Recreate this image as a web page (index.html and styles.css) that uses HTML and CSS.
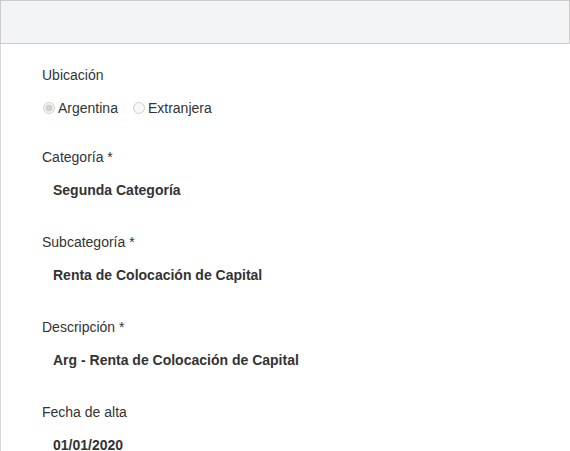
FILE: index.html
```html
<!DOCTYPE html>
<html lang="es">
<head>
<meta charset="utf-8">
<link rel="stylesheet" href="styles.css">
</head>
<body>
<div class="header"></div>
<div class="panel">
  <div class="field first">
    <div class="label">Ubicación</div>
    <div class="radios">
      <label class="radio"><input type="radio" name="ub" checked disabled>Argentina</label>
      <label class="radio"><input type="radio" name="ub" disabled>Extranjera</label>
    </div>
  </div>
  <div class="field">
    <div class="label">Categoría *</div>
    <div class="value">Segunda Categoría</div>
  </div>
  <div class="field">
    <div class="label">Subcategoría *</div>
    <div class="value">Renta de Colocación de Capital</div>
  </div>
  <div class="field">
    <div class="label">Descripción *</div>
    <div class="value">Arg - Renta de Colocación de Capital</div>
  </div>
  <div class="field">
    <div class="label">Fecha de alta</div>
    <div class="value">01/01/2020</div>
  </div>
</div>
</body>
</html>
```
FILE: styles.css
```css
html, body {
  margin: 0;
  padding: 0;
  background: #fff;
  font-family: "Liberation Sans", Arial, sans-serif;
  color: #333;
  overflow: hidden;
}
.header {
  height: 42px;
  background: #f3f4f6;
  border: 1px solid #cccccc;
}
.panel {
  border-left: 1px solid #d6d8dc;
  padding: 21px 0 0 41px;
  min-height: 500px;
}
.field {
  margin-bottom: 32px;
}
.field.first {
  margin-bottom: 29px;
}
.label {
  font-size: 14px;
  line-height: 20px;
}
.radios {
  margin-top: 13px;
  display: flex;
  align-items: center;
  height: 20px;
  font-size: 14px;
  color: #333;
}
.radio {
  display: flex;
  align-items: center;
  margin-right: 14px;
}
.radio input {
  margin: 0 3px 0 1px;
  width: 12px;
  height: 12px;
}
.value {
  margin-top: 13px;
  padding-left: 11px;
  font-size: 14px;
  font-weight: bold;
  line-height: 20px;
}
```
